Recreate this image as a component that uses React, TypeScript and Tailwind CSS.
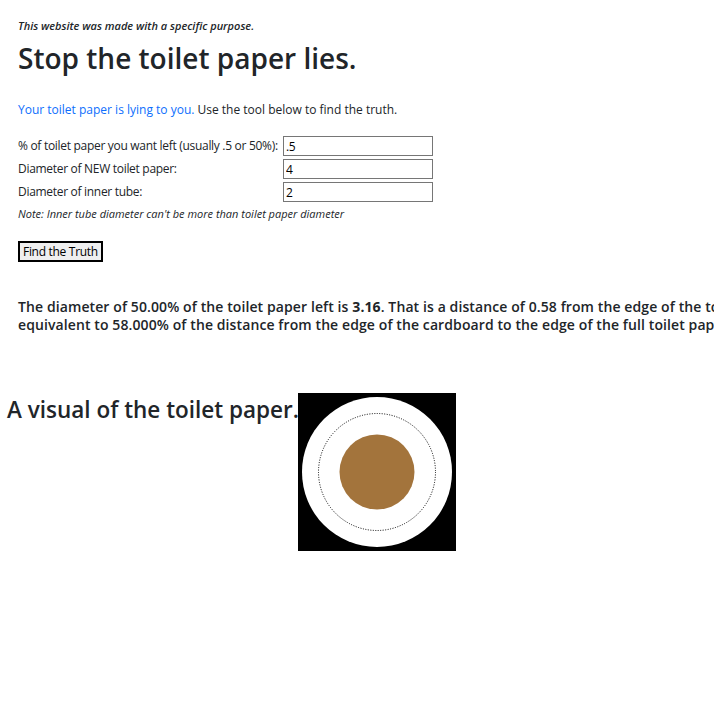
import { useState } from "react";

const font = { fontFamily: '"Open Sans", "Noto Sans", sans-serif' };

const ToiletVisual = () => {
  return (
    <svg width="158" height="158" viewBox="0 0 158 158" className="block shrink-0">
      <rect x="0" y="0" width="158" height="158" fill="#000" />
      <circle cx="79" cy="79" r="75" fill="#fff" />
      <circle
        cx="79"
        cy="79"
        r="58.5"
        fill="none"
        stroke="#000"
        strokeWidth="1"
        strokeDasharray="1 1.5"
      />
      <circle cx="79" cy="79" r="37.5" fill="#a3743c" />
    </svg>
  );
};

export default function App() {
  const [percent, setPercent] = useState(".5");
  const [outer, setOuter] = useState("4");
  const [inner, setInner] = useState("2");

  const inputClass =
    "h-[20px] w-[150px] border border-[#767676] px-[2px] text-[12px] text-black outline-none";

  return (
    <div
      className="h-[714px] w-[714px] overflow-hidden bg-white text-[#212529]"
      style={font}
    >
      <div className="px-[18px] pt-[19px]">
        <p className="text-[11px] font-semibold italic leading-[14px]">
          This website was made with a specific purpose.
        </p>
        <h1 className="mt-[7px] text-[28px] font-semibold leading-[36px]">
          Stop the toilet paper lies.
        </h1>
        <p className="mt-[25px] text-[12px] leading-[18px]">
          <a className="text-[#0d6efd]">Your toilet paper is lying to you.</a>{" "}
          Use the tool below to find the truth.
        </p>

        <div className="mt-[17px] flex flex-col gap-[3px] text-[12px] tracking-[-0.3px]">
          <div className="flex h-[20px] items-center">
            <label className="w-[265px] whitespace-nowrap">
              % of toilet paper you want left (usually .5 or 50%):
            </label>
            <input
              value={percent}
              onChange={(e) => setPercent(e.target.value)}
              className={inputClass}
            />
          </div>
          <div className="flex h-[20px] items-center">
            <label className="w-[265px] whitespace-nowrap">
              Diameter of NEW toilet paper:
            </label>
            <input
              value={outer}
              onChange={(e) => setOuter(e.target.value)}
              className={inputClass}
            />
          </div>
          <div className="flex h-[20px] items-center">
            <label className="w-[265px] whitespace-nowrap">
              Diameter of inner tube:
            </label>
            <input
              value={inner}
              onChange={(e) => setInner(e.target.value)}
              className={inputClass}
            />
          </div>
          <p className="text-[11px] italic leading-[18px] tracking-normal">
            Note: Inner tube diameter can't be more than toilet paper diameter
          </p>
        </div>

        <button className="mt-[18px] h-[21px] border-2 border-black bg-[#efefef] px-[3px] text-[12px] leading-[16px] tracking-[-0.3px] text-black">
          Find the Truth
        </button>

        <p className="mt-[36px] whitespace-nowrap text-[14px] font-semibold leading-[18px] tracking-[0.1px]">
          The diameter of 50.00% of the toilet paper left is{" "}
          <b className="font-bold">3.16</b>. That is a distance of 0.58 from the
          edge of the toilet paper. This is
          <br />
          equivalent to 58.000% of the distance from the edge of the cardboard
          to the edge of the full toilet paper.
        </p>
      </div>

      <div className="mt-[59px] flex items-start pl-[7px]">
        <h2 className="mt-[3px] w-[291px] whitespace-nowrap text-[22.5px] font-semibold leading-[28px]">
          A visual of the toilet paper.
        </h2>
        <ToiletVisual />
      </div>
    </div>
  );
}
